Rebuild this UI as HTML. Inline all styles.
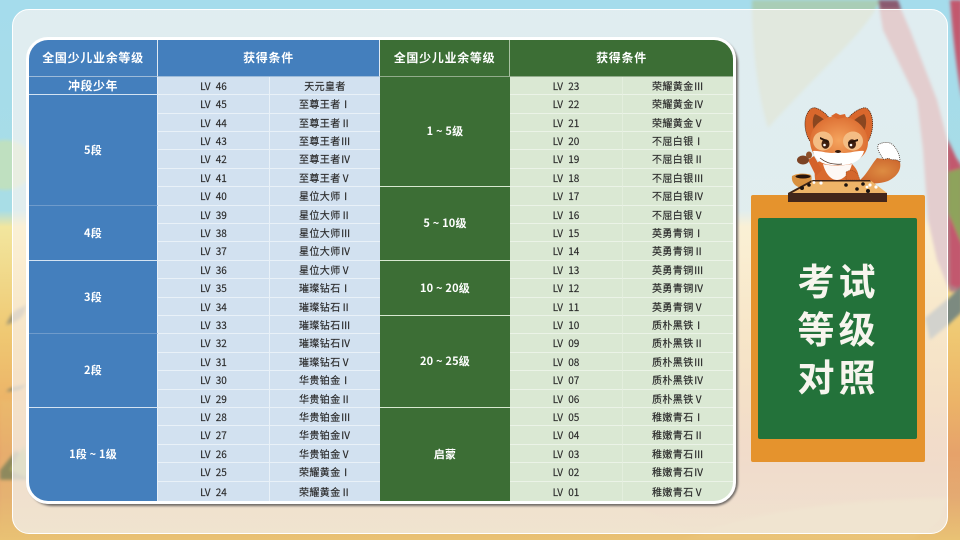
<!DOCTYPE html>
<html lang="zh"><head><meta charset="utf-8">
<style>
html,body{margin:0;padding:0}
body{width:960px;height:540px;overflow:hidden;position:relative;background:#a6dcec;font-family:"Liberation Sans","WenQuanYi Zen Hei","Noto Sans CJK SC",sans-serif}
#bg{position:absolute;left:0;top:0}
#panel{position:absolute;left:12px;top:9px;width:936px;height:525px;box-sizing:border-box;border:1px solid #fff;border-radius:17px;background:linear-gradient(180deg,rgba(255,246,243,.65) 0%,rgba(255,246,243,.65) 45%,rgba(242,240,238,.75) 100%)}
#wrap{position:absolute;left:26px;top:37px;width:704px;height:461px;border:3px solid #fff;border-radius:22px;overflow:hidden;background:#fff}
#shadow{position:absolute;left:26px;top:37px;width:710px;height:467px;border-radius:24px;box-shadow:2px 2px 2px #6f6a66}
table{border-collapse:separate;border-spacing:0;table-layout:fixed;width:704px;height:461px;font-family:"WenQuanYi Zen Hei","Noto Sans CJK SC",sans-serif}
td,th{padding:0;text-align:center;vertical-align:middle;font-size:10px;line-height:10px;color:#2a2a2a;overflow:hidden;box-sizing:border-box}
th{font-size:12px;font-weight:bold;color:#fff;letter-spacing:.7px;height:37px;border-right:1px solid #dfe9f2;border-bottom:1px solid #9dbbd9}
.b{background:#447fbd}.g{background:#3c6e35}
th.g{border-right-color:#a9c2a2;border-bottom-color:#92ac8b}
td.B,td.G{font-size:11px;line-height:11px;color:#fff;font-weight:bold;letter-spacing:.2px}
td.B{background:#447fbd;border-bottom:1px solid #d4e3f2;border-right:1px solid #e8f0f8}
td.f{border-bottom-color:#6f9bcb}
td.G{background:#3c6e35;border-bottom:1px solid #d8e8d0}
td.l{background:#d2e1f0;border-bottom:1px solid #e9f1f8;word-spacing:3px;-webkit-text-stroke:.15px #2a2a2a}
td.n{background:#d2e1f0;border-bottom:1px solid #e9f1f8;border-left:1px solid #e9f1f8;letter-spacing:.4px;-webkit-text-stroke:.15px #2a2a2a}
td.m{background:#dae8d3;border-bottom:1px solid #ebf3e7;word-spacing:3px;-webkit-text-stroke:.15px #2a2a2a}
td.o{background:#dae8d3;border-bottom:1px solid #ebf3e7;border-left:1px solid #e3eedd;letter-spacing:.4px;-webkit-text-stroke:.15px #2a2a2a}
tr:last-child td{border-bottom:none}
tr.a{height:18px}tr.c{height:19px}
#board{position:absolute;left:751px;top:195px;width:174px;height:267px;background:#e5932d;border-radius:2px}
#green{position:absolute;left:758px;top:218px;width:159px;height:221px;background:#23723a;border-radius:2px}
.t{position:absolute;left:759px;width:159px;text-align:center;color:#f7f5ee;font:bold 37px/48px "WenQuanYi Zen Hei","Noto Sans CJK SC",sans-serif;letter-spacing:4px}
#fox{position:absolute;left:780px;top:100px}
</style></head><body>
<svg id="bg" width="960" height="540" viewBox="0 0 960 540">
<defs>
<linearGradient id="s" x1="0" y1="0" x2="0" y2="1">
<stop offset="0" stop-color="#a5dcec"/><stop offset=".39" stop-color="#a8dde6"/><stop offset=".42" stop-color="#f2e69e"/><stop offset=".62" stop-color="#efc872"/><stop offset=".74" stop-color="#ecb468"/><stop offset=".84" stop-color="#e6a26a"/><stop offset=".92" stop-color="#e4aa72"/><stop offset="1" stop-color="#e9c274"/>
</linearGradient>
<filter id="bl"><feGaussianBlur stdDeviation="1.5"/></filter>
</defs>
<rect width="960" height="540" fill="url(#s)"/>
<g filter="url(#bl)">
<ellipse cx="5" cy="165" rx="28" ry="25" fill="#bfe0c0"/>
<path d="M752 0H880C868 30 830 60 768 128C758 95 752 50 752 0Z" fill="#a9cdb6"/>
<path d="M878 0L883 30 917 100 923 150 928 220 937 260 950 292 966 290V170L950 150 937 100 910 30 897 0Z" fill="#b08088"/>
<path d="M878 0H898L901 9H881Z" fill="#8a5a70"/>
<path d="M948 140L962 170V290L950 285Z" fill="#c2596e"/>
<path d="M950 0H962V100C955 60 952 25 950 0Z" fill="#c2596e"/>
<path d="M948 172L962 168V245L948 212Z" fill="#8ea35c"/>
<path d="M925 318L950 297 962 285V312L948 325 930 340Z" fill="#7c8a80"/>
<path d="M0 470L16 450 35 470V480H0Z" fill="#5f6a52"/>
<path d="M10 470L24 445 32 480Z" fill="#8ea35c"/>
<path d="M6 325C14 305 22 310 26 304 26 320 14 322 6 325Z" fill="#a59a74"/>
<path d="M6 392C12 385 18 388 26 384 22 392 12 390 6 392Z" fill="#8a8668"/>
<path d="M0 400H530C540 470 660 520 700 535H0Z" fill="#e8c274" opacity=".35"/>
<path d="M700 534C780 505 860 500 948 498L940 520 912 540H680Z" fill="#eac47a" opacity=".75"/>
</g>
</svg>
<div id="panel"></div>
<div id="shadow"></div>
<div id="wrap">
<table>
<colgroup><col style="width:129px"><col style="width:111px"><col style="width:111px"><col style="width:130px"><col style="width:112px"><col style="width:111px"></colgroup>
<tr><th class="b">全国少儿业余等级</th><th class="b" colspan="2">获得条件</th><th class="g">全国少儿业余等级</th><th class="g" colspan="2" style="border-right:none">获得条件</th></tr>
<tr class="a"><td class="B" style="font-size:12px;letter-spacing:.5px">冲段少年</td><td class="l">LV 46</td><td class="n">天元皇者</td><td class="G" rowspan="6">1 ~ 5级</td><td class="m">LV 23</td><td class="o">荣耀黄金Ⅲ</td></tr>
<tr class="c"><td class="B f" rowspan="6">5段</td><td class="l">LV 45</td><td class="n">至尊王者Ⅰ</td><td class="m">LV 22</td><td class="o">荣耀黄金Ⅳ</td></tr>
<tr class="a"><td class="l">LV 44</td><td class="n">至尊王者Ⅱ</td><td class="m">LV 21</td><td class="o">荣耀黄金Ⅴ</td></tr>
<tr class="a"><td class="l">LV 43</td><td class="n">至尊王者Ⅲ</td><td class="m">LV 20</td><td class="o">不屈白银Ⅰ</td></tr>
<tr class="c"><td class="l">LV 42</td><td class="n">至尊王者Ⅳ</td><td class="m">LV 19</td><td class="o">不屈白银Ⅱ</td></tr>
<tr class="a"><td class="l">LV 41</td><td class="n">至尊王者Ⅴ</td><td class="m">LV 18</td><td class="o">不屈白银Ⅲ</td></tr>
<tr class="c"><td class="l">LV 40</td><td class="n">星位大师Ⅰ</td><td class="G" rowspan="4">5 ~ 10级</td><td class="m">LV 17</td><td class="o">不屈白银Ⅳ</td></tr>
<tr class="a"><td class="B" rowspan="3">4段</td><td class="l">LV 39</td><td class="n">星位大师Ⅱ</td><td class="m">LV 16</td><td class="o">不屈白银Ⅴ</td></tr>
<tr class="a"><td class="l">LV 38</td><td class="n">星位大师Ⅲ</td><td class="m">LV 15</td><td class="o">英勇青铜Ⅰ</td></tr>
<tr class="c"><td class="l">LV 37</td><td class="n">星位大师Ⅳ</td><td class="m">LV 14</td><td class="o">英勇青铜Ⅱ</td></tr>
<tr class="a"><td class="B f" rowspan="4">3段</td><td class="l">LV 36</td><td class="n">星位大师Ⅴ</td><td class="G" rowspan="3">10 ~ 20级</td><td class="m">LV 13</td><td class="o">英勇青铜Ⅲ</td></tr>
<tr class="c"><td class="l">LV 35</td><td class="n">璀璨钻石Ⅰ</td><td class="m">LV 12</td><td class="o">英勇青铜Ⅳ</td></tr>
<tr class="a"><td class="l">LV 34</td><td class="n">璀璨钻石Ⅱ</td><td class="m">LV 11</td><td class="o">英勇青铜Ⅴ</td></tr>
<tr class="a"><td class="l">LV 33</td><td class="n">璀璨钻石Ⅲ</td><td class="G" rowspan="5">20 ~ 25级</td><td class="m">LV 10</td><td class="o">质朴黑铁Ⅰ</td></tr>
<tr class="c"><td class="B" rowspan="4">2段</td><td class="l">LV 32</td><td class="n">璀璨钻石Ⅳ</td><td class="m">LV 09</td><td class="o">质朴黑铁Ⅱ</td></tr>
<tr class="a"><td class="l">LV 31</td><td class="n">璀璨钻石Ⅴ</td><td class="m">LV 08</td><td class="o">质朴黑铁Ⅲ</td></tr>
<tr class="c"><td class="l">LV 30</td><td class="n">华贵铂金Ⅰ</td><td class="m">LV 07</td><td class="o">质朴黑铁Ⅳ</td></tr>
<tr class="a"><td class="l">LV 29</td><td class="n">华贵铂金Ⅱ</td><td class="m">LV 06</td><td class="o">质朴黑铁Ⅴ</td></tr>
<tr class="a"><td class="B" rowspan="5" style="border-bottom:none">1段 ~ 1级</td><td class="l">LV 28</td><td class="n">华贵铂金Ⅲ</td><td class="G" rowspan="5" style="border-bottom:none">启蒙</td><td class="m">LV 05</td><td class="o">稚嫩青石Ⅰ</td></tr>
<tr class="c"><td class="l">LV 27</td><td class="n">华贵铂金Ⅳ</td><td class="m">LV 04</td><td class="o">稚嫩青石Ⅱ</td></tr>
<tr class="a"><td class="l">LV 26</td><td class="n">华贵铂金Ⅴ</td><td class="m">LV 03</td><td class="o">稚嫩青石Ⅲ</td></tr>
<tr class="c"><td class="l">LV 25</td><td class="n">荣耀黄金Ⅰ</td><td class="m">LV 02</td><td class="o">稚嫩青石Ⅳ</td></tr>
<tr class="c"><td class="l">LV 24</td><td class="n">荣耀黄金Ⅱ</td><td class="m">LV 01</td><td class="o">稚嫩青石Ⅴ</td></tr>
</table>
</div>
<div id="board"></div>
<div id="green"></div>
<div class="t" style="top:255px">考试</div>
<div class="t" style="top:303px">等级</div>
<div class="t" style="top:351px">对照</div>
<svg id="fox" width="130" height="105" viewBox="0 0 130 105">
<defs>
<radialGradient id="h" cx=".5" cy=".5" r=".6"><stop offset="0" stop-color="#f5a45e"/><stop offset="1" stop-color="#d9672c"/></radialGradient>
<radialGradient id="t2" cx=".6" cy=".5" r=".6"><stop offset="0" stop-color="#dd8c42"/><stop offset="1" stop-color="#cb632c"/></radialGradient>
</defs>
<path d="M76 82C84 80 90 66 97 58C104 60 112 56 120 62C122 72 114 78 108 81C100 84 88 84 76 84Z" fill="url(#t2)"/>
<path d="M98 45C102 42 109 41 113 45C118 50 120 56 120 62C116 58 113 61 110 59C106 57 104 62 102 57C100 54 97 50 98 45Z" fill="#fff" stroke="#2a1a10" stroke-width=".7" stroke-dasharray="1 1"/>
<path d="M12 76C17 73 26 73 31 75C33 80 30 86 22 88C15 87 11 82 12 76Z" fill="#d9913f"/>
<ellipse cx="23" cy="76.500" rx="7.500" ry="2" fill="#26140c"/>
<path d="M38 62C46 58 64 58 72 64C78 70 80 76 78 84H36C34 76 34 68 38 62Z" fill="#d96a2e"/>
<path d="M43 64C50 66 62 66 72 64C70 72 64 80 57 80C50 80 45 72 43 64Z" fill="#fdf8f5"/>
<path d="M66 72C72 68 78 72 80 80H66Z" fill="#d4662c" stroke="#5a2c12" stroke-width=".4" stroke-dasharray="1 1"/>
<path d="M28 60L34 56 42 70 36 76Z" fill="#d4622a"/>
<ellipse cx="23" cy="60" rx="6" ry="4.500" fill="#7c4324"/>
<ellipse cx="29" cy="55" rx="3" ry="3.500" fill="#8e5029"/>
<path d="M32 44C25 36 23 22 27 14C29 9 33 7 36 8C42 10 48 15 52 22L38 48Z" fill="#d9672c" stroke="#3a1c0c" stroke-width=".7" stroke-dasharray="1.200 .8"/>
<path d="M35 33C32 26 32 18 35 14C40 16 45 20 48 23L38 34Z" fill="#8a4620"/>
<path d="M87 43C93 34 94 22 91 14C89 9 86 7 83 8C76 10 70 15 66 21L80 48Z" fill="#d9672c" stroke="#3a1c0c" stroke-width=".7" stroke-dasharray="1.200 .8"/>
<path d="M83 33C87 26 87 18 84 14C79 16 74 20 71 23L80 34Z" fill="#8a4620"/>
<path d="M58 16C74 16 87 26 88 42C88 56 76 64 58 65C40 65 31 55 30 42C30 27 42 16 58 16Z" fill="url(#h)"/>
<path d="M51 16L56 13 60 15 65 14 66 17 58 19Z" fill="#d9672c"/>
<ellipse cx="43" cy="41" rx="10" ry="9.500" fill="#f4bd84"/>
<ellipse cx="73" cy="41" rx="10" ry="9.500" fill="#f4bd84"/>
<ellipse cx="45.500" cy="44" rx="4" ry="4.800" fill="#42200f"/>
<ellipse cx="72" cy="44" rx="4" ry="4.800" fill="#42200f"/>
<circle cx="44.500" cy="45" r="1.300" fill="#fff"/><circle cx="71" cy="45" r="1.300" fill="#fff"/>
<path d="M40 37L49 41 48 43 40 39Z" fill="#2a150a"/>
<path d="M78 39L68 42 69 44 78 41Z" fill="#2a150a"/>
<path d="M33 51C40 50 50 55 58 52C66 55 76 50 84 51C82 60 72 66 58 65C44 66 35 61 33 51Z" fill="#fff"/>
<path d="M40 58C46 63 54 65 62 64" fill="none" stroke="#3a1c0c" stroke-width=".7"/>
<ellipse cx="58" cy="51.500" rx="3" ry="1.500" fill="#3a1c0c"/>
<path d="M32 80H90L107 93H8Z" fill="#eeb468"/>
<path d="M32 80H90L91 81.500H31Z M32 80L8 93H12L33 81.500Z" fill="#3d2316"/>
<rect x="8" y="93" width="99" height="9" fill="#43261a"/>
<g fill="#1a1210"><circle cx="29" cy="85" r="1.800"/><circle cx="22" cy="88" r="2"/><circle cx="66" cy="85" r="1.800"/><circle cx="77" cy="89" r="1.800"/><circle cx="83" cy="84" r="1.800"/><circle cx="88" cy="91" r="2"/></g>
<g fill="#fff"><circle cx="41" cy="83" r="1.600"/><circle cx="34" cy="82.500" r="1.400"/><circle cx="90" cy="85" r="1.600"/><circle cx="96" cy="87" r="1.600"/><circle cx="87" cy="87" r="1.400"/></g>
</svg>
</body></html>
